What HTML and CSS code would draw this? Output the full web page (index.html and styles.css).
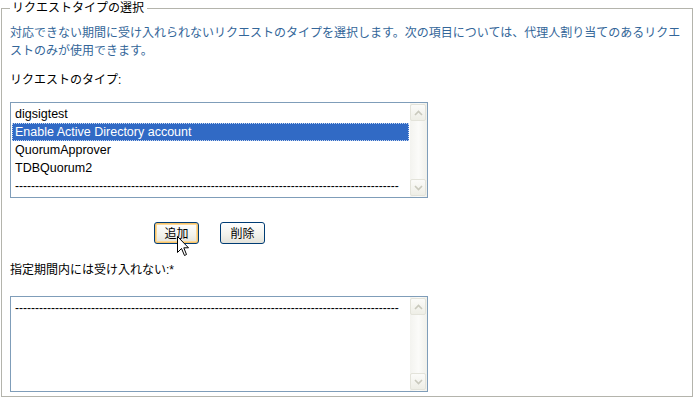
FILE: index.html
```html
<!DOCTYPE html>
<html lang="ja">
<head>
<meta charset="utf-8">
<title>リクエストタイプの選択</title>
<link rel="stylesheet" href="styles.css">
</head>
<body>
<fieldset class="panel">
  <legend class="panel-title">リクエストタイプの選択</legend>
  <p class="desc">対応できない期間に受け入れられないリクエストのタイプを選択します。次の項目については、代理人割り当てのあるリクエストのみが使用できます。</p>
  <div class="label label-types">リクエストのタイプ:</div>
  <div class="listbox">
    <div class="items">
      <div class="row">digsigtest</div>
      <div class="row selected">Enable Active Directory account</div>
      <div class="row">QuorumApprover</div>
      <div class="row">TDBQuorum2</div>
      <div class="row dashes">------------------------------------------------------------------------------------------------</div>
    </div>
    <div class="scroll">
      <div class="sbtn"><svg width="9" height="6" viewBox="0 0 9 6"><path d="M1 5 L4.5 1.5 L8 5" fill="none" stroke="#c9c9bd" stroke-width="1.6"/></svg></div>
      <div class="track"></div>
      <div class="sbtn"><svg width="9" height="6" viewBox="0 0 9 6"><path d="M1 1 L4.5 4.5 L8 1" fill="none" stroke="#c9c9bd" stroke-width="1.6"/></svg></div>
    </div>
  </div>
  <div class="actions">
    <button class="btn focused" type="button">追加</button>
    <button class="btn" type="button">削除</button>
    <svg class="cursor" width="13" height="21" viewBox="0 0 13 21"><path d="M0.5 0.5 L0.5 16.5 L4.5 12.5 L7.5 19.5 L9.5 18.5 L6.8 11.8 L11.5 11.8 Z" fill="#fff" stroke="#000" stroke-width="1" stroke-linejoin="miter"/></svg>
  </div>
  <div class="label label-excluded">指定期間内には受け入れない:*</div>
  <div class="listbox">
    <div class="items">
      <div class="row dashes">------------------------------------------------------------------------------------------------</div>
    </div>
    <div class="scroll">
      <div class="sbtn"><svg width="9" height="6" viewBox="0 0 9 6"><path d="M1 5 L4.5 1.5 L8 5" fill="none" stroke="#c9c9bd" stroke-width="1.6"/></svg></div>
      <div class="track"></div>
      <div class="sbtn"><svg width="9" height="6" viewBox="0 0 9 6"><path d="M1 1 L4.5 4.5 L8 1" fill="none" stroke="#c9c9bd" stroke-width="1.6"/></svg></div>
    </div>
  </div>
</fieldset>
</body>
</html>
```

FILE: styles.css
```css
html, body {
  margin: 0;
  padding: 0;
  background: #ffffff;
}

body {
  font-family: "Liberation Sans", "Noto Sans CJK JP", sans-serif;
  font-size: 12px;
  color: #000;
}

.panel {
  margin: 0 0 0 1px;
  width: 676px;
  padding: 8px 6px 4px 8px;
  border: 1px solid #b4b4ac;
  box-sizing: content-box;
  min-width: 0;
}

.panel-title {
  padding: 0 3px 0 2px;
  line-height: 16px;
  font-size: 12px;
  color: #000;
}

.desc {
  margin: 0;
  line-height: 18px;
  color: #336699;
}

.label {
  line-height: 18px;
}

.label-types {
  margin-top: 11px;
}

.listbox {
  display: flex;
  width: 418px;
  height: 96px;
  border: 1px solid #7f9db9;
  box-sizing: border-box;
  background: #fff;
}

.label-types + .listbox {
  margin-top: 13px;
}

.items {
  flex: 1;
  min-width: 0;
  padding: 2px 1px 0 1px;
  overflow: hidden;
}

.row {
  height: 18px;
  line-height: 18px;
  padding-left: 3px;
  white-space: nowrap;
  font-size: 12.5px;
  box-sizing: border-box;
}

.row.selected {
  background: #316ac5;
  color: #fff;
  border: 1px dotted #c8d8f0;
  padding-left: 2px;
  line-height: 16px;
}

.row.dashes {
  font-size: 12px;
}

.scroll {
  width: 17px;
  display: flex;
  flex-direction: column;
  padding: 1px 0;
  background: linear-gradient(to right, #f3f3ef, #fbfbf9 50%, #f0f0ea);
}

.sbtn {
  height: 15px;
  margin: 0 1px 0 0;
  border: 1px solid #e3e3da;
  border-radius: 2px;
  background: linear-gradient(#fbfbf9, #eeeee6);
  display: flex;
  align-items: center;
  justify-content: center;
}

.track {
  flex: 1;
}

.actions {
  position: relative;
  display: flex;
  gap: 21px;
  margin: 24px 0 0 144px;
  height: 22px;
}

.btn {
  width: 45px;
  height: 22px;
  padding: 0;
  border: 1px solid #003c74;
  border-radius: 3px;
  background: linear-gradient(#ffffff, #f2f2ec 60%, #e3e2da);
  font-family: "Noto Sans CJK JP", "Liberation Sans", sans-serif;
  font-size: 12px;
  line-height: 18px;
  color: #000;
}

.btn.focused {
  box-shadow: inset 0 0 0 1px #f7c36a, inset 0 0 0 2px #fbd999;
}

.cursor {
  position: absolute;
  left: 23px;
  top: 14px;
}

.label-excluded {
  margin-top: 17px;
}

.label-excluded + .listbox {
  margin-top: 17px;
}
```
